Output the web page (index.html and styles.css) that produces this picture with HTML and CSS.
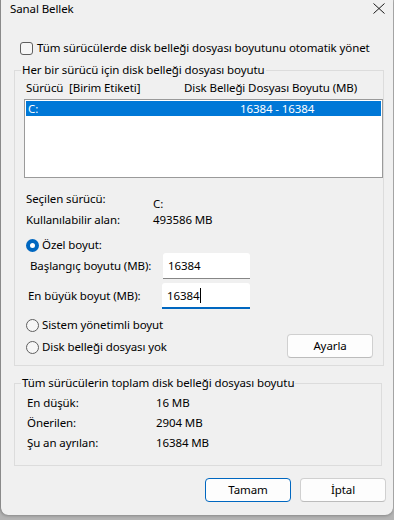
FILE: index.html
```html
<!DOCTYPE html>
<html lang="tr">
<head>
<meta charset="utf-8">
<title>Sanal Bellek</title>
<link rel="stylesheet" href="styles.css">
</head>
<body>
<div class="window">
  <div class="titlebar">
    <span class="title">Sanal Bellek</span>
    <svg class="close" width="12" height="11" viewBox="0 0 12 11"><path d="M0.5 0.5 L11.5 10.5 M11.5 0.5 L0.5 10.5" stroke="#1a1a1a" stroke-width="1" fill="none"/></svg>
  </div>
  <div class="content">
    <div class="check"><span class="box"></span><span>Tüm sürücülerde disk belleği dosyası boyutunu otomatik yönet</span></div>

    <fieldset class="group g1">
      <legend>Her bir sürücü için disk belleği dosyası boyutu</legend>
      <div class="cols"><span class="c1">Sürücü  [Birim Etiketi]</span><span>Disk Belleği Dosyası Boyutu (MB)</span></div>
      <div class="list">
        <div class="row sel"><span class="r1">C:</span><span>16384 - 16384</span></div>
      </div>
      <div class="info first"><span class="lbl">Seçilen sürücü:</span><span class="val low">C:</span></div>
      <div class="info"><span class="lbl">Kullanılabilir alan:</span><span class="val">493586 MB</span></div>
      <div class="radio r-custom"><span class="dot on"></span><span>Özel boyut:</span></div>
      <div class="field f1"><span class="flbl">Başlangıç boyutu (MB):</span><span class="input">16384</span></div>
      <div class="field f2"><span class="flbl">En büyük boyut (MB):</span><span class="input focus">16384<span class="caret"></span></span></div>
      <div class="radio r-sys"><span class="dot"></span><span>Sistem yönetimli boyut</span></div>
      <div class="lastrow">
        <div class="radio r-none"><span class="dot"></span><span>Disk belleği dosyası yok</span></div>
        <span class="btn set">Ayarla</span>
      </div>
    </fieldset>

    <fieldset class="group g2">
      <legend>Tüm sürücülerin toplam disk belleği dosyası boyutu</legend>
      <div class="stat"><span class="slbl">En düşük:</span><span>16 MB</span></div>
      <div class="stat"><span class="slbl">Önerilen:</span><span>2904 MB</span></div>
      <div class="stat"><span class="slbl">Şu an ayrılan:</span><span>16384 MB</span></div>
    </fieldset>

    <div class="buttons">
      <span class="btn default">Tamam</span>
      <span class="btn">İptal</span>
    </div>
  </div>
</div>
</body>
</html>
```

FILE: styles.css
```css
html, body {
  margin: 0;
  padding: 0;
}
body {
  background: #b4b4b4;
  width: 394px;
  height: 520px;
  overflow: hidden;
  font-family: "Noto Sans", "Segoe UI", sans-serif;
  font-size: 11.5px;
  letter-spacing: -0.1px;
  line-height: 16px;
  color: #000;
}
.window {
  box-sizing: border-box;
  width: 393px;
  height: 515px;
  background: #f0f0f0;
  border-left: 1px solid #8a8a8a;
  border-radius: 0 0 8px 8px;
  box-shadow: 0 1px 3px rgba(0,0,0,0.25);
}
.titlebar {
  height: 20px;
  display: flex;
  align-items: flex-start;
  justify-content: space-between;
  padding-left: 9px;
  box-sizing: border-box;
}
.title {
  margin-top: 1px;
}
.close {
  margin-top: 3px;
  margin-right: 8px;
}
.content {
  padding: 20px 0 0 13px;
}
.check {
  display: flex;
  align-items: center;
  height: 16px;
}
.box {
  width: 11px;
  height: 11px;
  border: 1px solid #5f5f5f;
  border-radius: 3px;
  background: #f6f6f6;
  margin-left: 6px;
  margin-right: 4px;
}
.group {
  box-sizing: border-box;
  width: 368px;
  margin: 0;
  padding: 0;
  border: 1px solid #dcdcdc;
}
.group legend {
  margin-left: 6px;
  padding: 0 1px;
  line-height: 16px;
}
.g1 {
  margin-top: 6px;
  padding-bottom: 7px;
}
.cols {
  display: flex;
  margin-top: 2px;
  padding-left: 11px;
}
.c1 {
  white-space: pre;
  width: 158px;
}
.list {
  box-sizing: border-box;
  width: 359px;
  height: 79px;
  margin: 3px 0 0 9px;
  border: 1px solid #9a9a9a;
  background: #fff;
  padding: 1px;
}
.row {
  display: flex;
  height: 15px;
  line-height: 15px;
}
.row.sel {
  background: #0078d7;
  color: #fff;
}
.r1 {
  width: 212px;
  padding-left: 2px;
}
.info {
  display: flex;
  padding-left: 11px;
  height: 16px;
}
.info.first {
  margin-top: 13px;
  height: 21px;
}
.lbl {
  width: 127px;
}
.val.low {
  align-self: flex-end;
}
.radio {
  display: flex;
  align-items: center;
  height: 16px;
  padding-left: 11px;
}
.r-custom {
  margin-top: 9px;
}
.dot {
  box-sizing: border-box;
  width: 13px;
  height: 13px;
  border-radius: 50%;
  border: 1px solid #5f5f5f;
  background: #f6f6f6;
  margin-right: 3px;
}
.dot.on {
  border: 4px solid #0067c0;
  background: #fff;
}
.field {
  display: flex;
  align-items: center;
}
.f1 {
  padding-left: 15px;
}
.f1 .flbl {
  width: 133px;
}
.f2 {
  margin-top: 4px;
  padding-left: 13px;
}
.f2 .flbl {
  width: 134px;
}
.input {
  box-sizing: border-box;
  height: 26px;
  background: #fff;
  border-bottom: 1px solid #868686;
  border-radius: 3px 3px 0 0;
  padding-left: 5px;
  line-height: 25px;
  display: flex;
  align-items: center;
}
.f1 .input {
  width: 87px;
}
.f2 .input {
  width: 88px;
}
.input.focus {
  border-bottom: 2px solid #0067c0;
}
.caret {
  display: inline-block;
  width: 1px;
  height: 15px;
  background: #000;
  margin-left: 1px;
}
.r-sys {
  margin-top: 8px;
}
.lastrow {
  display: flex;
  align-items: center;
  justify-content: space-between;
  margin-top: 1px;
  padding-right: 10px;
}
.r-none {
  margin-top: 2px;
}
.btn {
  box-sizing: border-box;
  display: inline-flex;
  align-items: center;
  justify-content: center;
  width: 86px;
  height: 24px;
  background: #fdfdfd;
  border: 1px solid #d0d0d0;
  border-bottom-color: #bcbcbc;
  border-radius: 4px;
}
.btn.set {
  width: 86px;
}
.btn.default {
  border: 1px solid #0067c0;
}
.g2 {
  margin-top: 9px;
  padding-bottom: 14px;
}
.stat {
  display: flex;
  padding-left: 12px;
  margin-top: 4px;
}
.slbl {
  width: 129px;
}
.buttons {
  display: flex;
  justify-content: flex-end;
  gap: 9px;
  margin-top: 12px;
  margin-right: 7px;
}
```
